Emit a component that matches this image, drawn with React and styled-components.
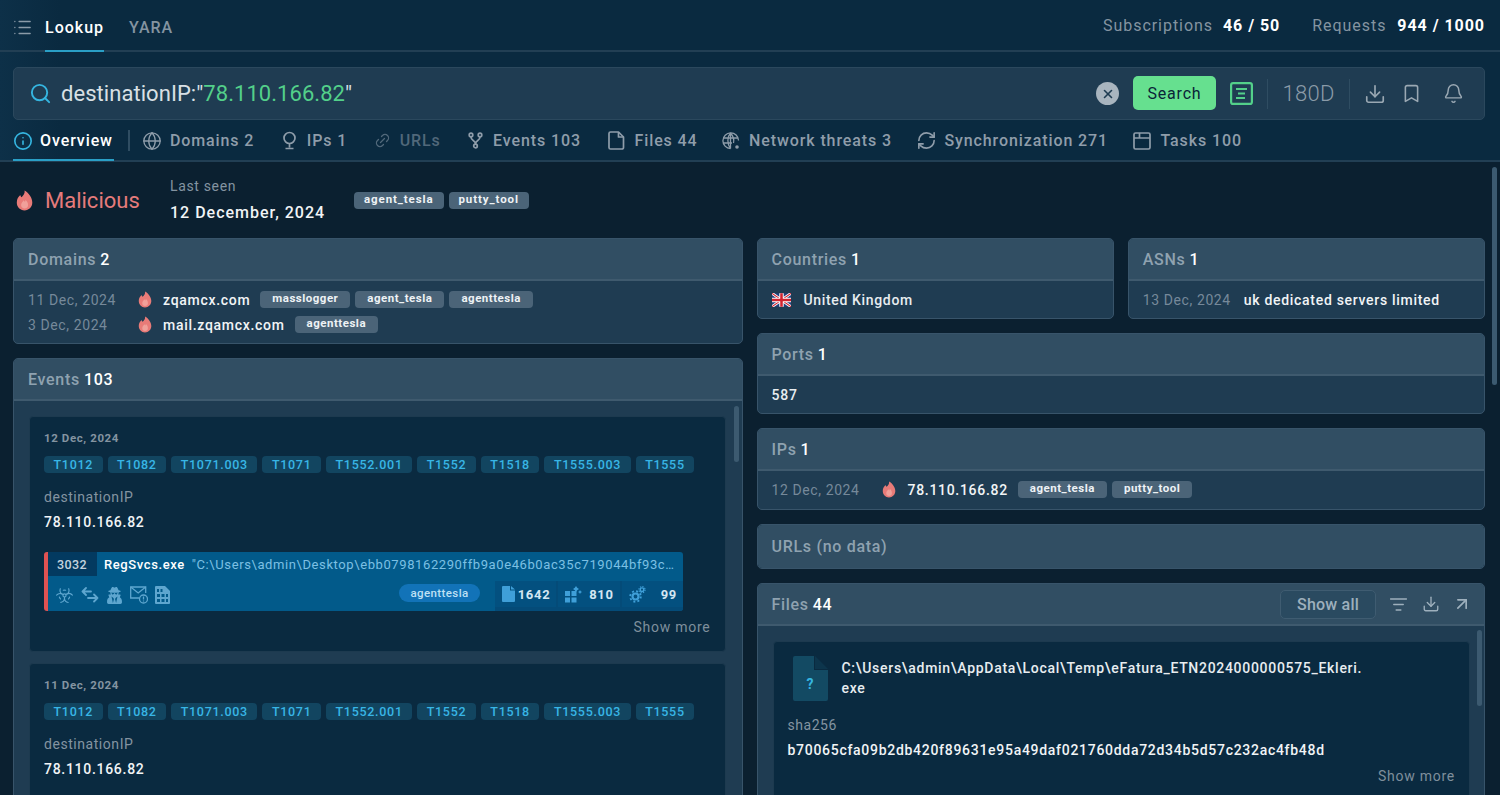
import React from 'react';
import styled, { createGlobalStyle } from 'styled-components';
import { List, Search, Info, Globe, Link2, RefreshCw, X, Download, Bookmark, Bell, ListFilter, ArrowUpRight, Biohazard } from 'lucide-react';
import { FaUserSecret } from 'react-icons/fa';

const Global = createGlobalStyle`
  html, body { margin: 0; padding: 0; background: #0b2030; }
  * { box-sizing: border-box; }
  body { font-family: Roboto, "Liberation Sans", sans-serif; color: #e6ebef; }
`;

const Page = styled.div`
  width: 1500px; height: 795px; overflow: hidden; position: relative;
  display: flex; flex-direction: column; background: #0b2030;
`;
const Head = styled.div`
  background: linear-gradient(90deg, #0d3048 0, #0a2a40 60px, #0a2a40 100%);
  border-bottom: 2px solid #223f54; height: 162px; flex: none;
  display: flex; flex-direction: column;
`;
const TopBar = styled.div`
  height: 52px; flex: none; display: flex; align-items: stretch; padding: 0 15px 0 14px;
  border-bottom: 2px solid #223f54;
`;
const MenuBtn = styled.div`
  width: 31px; display: flex; align-items: center; color: #8b9ba8; padding-top: 4px;
`;
const TopTab = styled.div`
  height: 52px; margin-right: 25px; display: flex; align-items: center; padding-top: 5px;
  font-size: 16px; font-weight: 500; letter-spacing: 1px;
  color: ${p => p.$active ? '#ffffff' : '#8494a1'};
  border-bottom: 2px solid ${p => p.$active ? '#2a9fc6' : 'transparent'};
`;
const Quota = styled.div`
  margin-left: auto; display: flex; align-items: center; padding-top: 1px;
`;
const QuotaLabel = styled.span`
  font-size: 16px; color: #8494a1; letter-spacing: .95px; margin-right: ${p => p.$mr ?? 10}px;
`;
const QuotaValue = styled.span`
  font-size: 16px; font-weight: 700; color: #fff; letter-spacing: .95px; margin-right: ${p => p.$last ? 0 : 32}px;
`;
const SearchBar = styled.div`
  height: 53px; margin: 15px 15px 0 13px; flex: none; background: #1f3c52;
  border: 1px solid #2b485d; border-radius: 5px; display: flex; align-items: center;
  padding: 0 20px 0 15px;
`;
const SearchIcon = styled.div`
  color: #35b5e0; display: flex; margin-right: 9px;
`;
const Query = styled.div`
  font-size: 22px; color: #d9e0e5; flex: 1; letter-spacing: .05px; white-space: nowrap;
`;
const Green = styled.span` color: #53d08a; `;
const Clear = styled.div`
  width: 23px; height: 23px; border-radius: 50%; background: #a9b5bf; color: #1f3c52;
  display: flex; align-items: center; justify-content: center; margin-right: 14px;
`;
const SearchBtn = styled.div`
  width: 83px; height: 34px; border-radius: 5px; background: #66e08f; color: #0a2438;
  font-size: 16px; font-weight: 400; letter-spacing: .8px; margin-bottom: 1px;
  display: flex; align-items: center; justify-content: center; margin-right: 14px;
`;
const Outline = styled.div`
  width: 23px; height: 23px; color: #53d08a; display: flex; margin-right: 14px;
`;
const VLine = styled.div`
  width: 1px; height: 30px; background: #2f4d62; flex: none;
`;
const Period = styled.div`
  font-size: 22px; font-weight: 300; color: #8b9ba8; width: 81px; text-align: center; letter-spacing: .3px;
`;
const ToolIcon = styled.div`
  color: #9aa8b3; display: flex; margin-left: ${p => p.$ml || 0}px;
`;
const Tabs = styled.div`
  display: flex; align-items: stretch; height: 41px; padding-left: 13px;
`;
const Tab = styled.div`
  display: flex; align-items: center; gap: ${p => p.$active ? 8 : 9}px; height: 41px; margin-right: ${p => p.$mr ?? 26.4}px;
  padding: ${p => p.$active ? '2px 1px 0' : '0'};
  font-size: 16px; font-weight: 500; letter-spacing: .9px; white-space: nowrap;
  color: ${p => p.$active ? '#fff' : p.$off ? '#51687a' : '#8f9daa'};
  border-bottom: ${p => p.$active ? '2px solid #2a9fc6' : 'none'};
  svg { color: ${p => p.$active ? '#35b5e0' : p.$off ? '#51687a' : '#8f9daa'}; flex: none; }
`;
const TabSep = styled.div`
  width: 2px; height: 21px; background: #2f4d62; align-self: center; margin: 0 13px 0 14px; flex: none;
`;
const Main = styled.div`
  flex: 1; min-height: 0; overflow: hidden; position: relative; padding: 0 15px 0 13px;
`;
const Thumb = styled.div`
  position: absolute; background: ${p => p.$c || '#3c5a70'}; border-radius: 3px;
  right: ${p => p.$r}px; top: ${p => p.$t}px; width: 5px; height: ${p => p.$h}px;
`;
const Summary = styled.div`
  height: 76px; display: flex; align-items: center;
`;
const Verdict = styled.div`
  display: flex; align-items: center; gap: 12px; width: 157px; padding-left: 3px;
  font-size: 22px; color: #e57b7b; padding-top: 1px;
`;
const Seen = styled.div` width: 184px; `;
const SeenLabel = styled.div` font-size: 14px; color: #8494a1; letter-spacing: .65px; line-height: 20px; `;
const SeenDate = styled.div` font-size: 16px; font-weight: 500; color: #f1f4f6; letter-spacing: 1px; line-height: 24px; margin-top: 5px; `;
const TagRow = styled.div` display: flex; gap: 5px; align-items: center; `;
const Tag = styled.span`
  height: 17px; border-radius: 4px; background: #4b6478; color: #eef2f5;
  padding: 0 ${p => p.$compact ? 12 : 10}px ${p => p.$compact ? 4 : 2}px;
  font-size: 11.5px; font-weight: 700; letter-spacing: ${p => p.$compact ? .5 : .9}px;
  display: inline-flex; align-items: center; white-space: nowrap;
`;
const Columns = styled.div`
  display: grid; grid-template-columns: 729.5px 728.5px; gap: 14px; align-items: start;
`;
const Col = styled.div` display: flex; flex-direction: column; gap: 14px; min-width: 0; `;
const Pair = styled.div` display: grid; grid-template-columns: 1fr 1fr; gap: 14px; `;
const Panel = styled.section`
  background: #1f3c52; border: 1px solid #38546a; border-radius: 5px; overflow: hidden; position: relative;
`;
const PanelHead = styled.div`
  height: ${p => p.$plain ? 43 : 42}px; background: #314e63; display: flex; align-items: center; padding: 0 14px;
  border-bottom: ${p => p.$plain ? 'none' : '2px solid #3f5a6e'}; font-size: 16px; font-weight: 500; color: #8fa2b0; letter-spacing: .7px;
`;
const Num = styled.b` color: #fff; font-weight: 500; margin-left: 4px; letter-spacing: .7px; `;
const Body = styled.div` padding: ${p => p.$pad || '6px 14px'}; `;
const Row = styled.div`
  height: ${p => p.$h || 25}px; display: flex; align-items: center; font-size: 14px;
`;
const DateCell = styled.span`
  color: #76899a; letter-spacing: .6px; width: ${p => p.$w || 110}px; flex: none; white-space: nowrap;
`;
const Flame = styled.span` display: flex; width: 14px; flex: none; margin-right: ${p => p.$mr ?? 0}px; `;
const Host = styled.span`
  color: #f1f4f6; font-weight: 500; letter-spacing: .7px; margin-right: 10px; white-space: nowrap;
`;
const Cards = styled.div`
  padding: 15px ${p => p.$right ?? 15}px 0 15px; display: flex; flex-direction: column; gap: 11px;
`;
const Card = styled.div`
  background: #0a2a40; border: 1px solid #1d3a4f; border-radius: 4px; padding: 14px; height: ${p => p.$h || 'auto'}; position: relative;
`;
const EventDate = styled.div`
  font-size: 11.5px; font-weight: 700; color: #8494a1; letter-spacing: .6px; line-height: 14px;
`;
const Ttags = styled.div` display: flex; gap: 5px; margin-top: 11px; `;
const TTag = styled.span`
  height: 17px; border-radius: 4px; background: #124560; color: #38b6e6; padding: 0 9.5px;
  font-size: 12.5px; font-weight: 500; letter-spacing: .71px; display: inline-flex; align-items: center; white-space: nowrap;
`;
const FieldLabel = styled.div`
  font-size: 14px; color: #8494a1; letter-spacing: .55px; line-height: 18px; margin-top: ${p => p.$mt ?? 15}px;
`;
const FieldValue = styled.div`
  font-size: 14px; font-weight: 500; color: #f1f4f6; letter-spacing: .71px; line-height: 18px; margin-top: 7px; white-space: nowrap;
`;
const Process = styled.div`
  margin-top: 21px; width: 639px; height: 59px; background: #025a8a; border-left: 4px solid #e05252; border-radius: 3px;
  display: flex; flex-direction: column; overflow: hidden;
`;
const ProcTop = styled.div` height: 24px; display: flex; align-items: center; flex: none; `;
const Pid = styled.div`
  width: 49px; height: 24px; background: #033a60; color: #c4d3de; font-size: 12.5px; font-weight: 500; letter-spacing: .4px;
  display: flex; align-items: center; justify-content: center; padding-right: 1px;
`;
const ProcName = styled.div`
  font-size: 13px; font-weight: 500; color: #fff; letter-spacing: .6px; margin: 0 7px 0 7px; white-space: nowrap;
`;
const ProcCmd = styled.div`
  font-size: 13px; color: #7cc0e4; letter-spacing: .6px; white-space: nowrap;
`;
const ProcBottom = styled.div` flex: 1; display: flex; align-items: stretch; `;
const ProcIcons = styled.div`
  display: flex; align-items: center; gap: 7px; color: #5ea6cf; padding-left: 7px; flex: 1; padding-top: 3px;
`;
const Pill = styled.div`
  height: 18px; width: 81px; border-radius: 9px; background: #1273b8; color: #bfe0f4; font-size: 11.5px; font-weight: 500; letter-spacing: .4px;
  display: flex; align-items: center; justify-content: center; align-self: center; margin-right: 15px; margin-bottom: 1px;
`;
const Stats = styled.div`
  width: 188px; margin-top: 5px; background: #044b78; display: flex; gap: 2px; padding-bottom: 4px;
`;
const Stat = styled.div`
  flex: 1; background: #03507f; display: flex; align-items: center; justify-content: space-between; padding: 0 6px 0 7px;
  font-size: 13px; font-weight: 700; color: #d3e6f2; letter-spacing: .7px;
  svg { color: #3f9fd8; flex: none; }
`;
const ShowMore = styled.div`
  text-align: right; font-size: 14px; color: #7f8f9c; letter-spacing: .75px; line-height: 18px; margin-top: ${p => p.$mt ?? 7}px;
`;
const ShowAll = styled.div`
  margin-left: auto; width: 96px; height: 29px; border: 1px solid #3f5c71; border-radius: 5px;
  display: flex; align-items: center; justify-content: center; color: #9eb0bd; font-size: 16px; font-weight: 500;
  margin-right: 12px; letter-spacing: .2px; background: #2a4a60;
`;
const HeadIcon = styled.div` display: flex; color: #9eb0bd; margin-left: ${p => p.$ml || 0}px; margin-right: ${p => p.$mr || 0}px; `;
const FileHead = styled.div` display: flex; gap: 14px; align-items: flex-start; padding-left: 5px; `;
const FilePath = styled.div`
  font-size: 14px; font-weight: 500; color: #e8edf0; line-height: 20px; letter-spacing: .7px; white-space: nowrap; margin-top: 2px;
`;
const Country = styled.span`
  color: #e8edf0; font-weight: 500; letter-spacing: .65px; margin-left: 13px;
`;
const Port = styled.div`
  font-size: 14px; font-weight: 500; color: #e8edf0; letter-spacing: .8px;
`;

const FlameIcon = () => (
  <svg width="17" height="21" viewBox="0 0 17 21"><path fill="#e87b78" d="M8.600.6c.5 3.100-1.200 4.700-3 6.600-.9-.7-1.200-1.500-1.300-2.200C2.300 6.700.8 9 .8 12.500c0 4.500 3.400 7.900 7.700 7.900s7.800-3.300 7.800-7.900C16.300 7.900 12.900 3.100 8.600.6z"/><path fill="#f0a09a" d="M8.600 18.500c-2 0-3.500-1.500-3.500-3.500 0-2 1.600-3.100 2.500-4.800.3.900.9 1.300 1.500 1.500.3-.7.4-1.300.3-2 1.800 1.400 2.700 3.300 2.700 5.300 0 2-1.500 3.500-3.500 3.500z"/></svg>
);
const SmallFlame = () => (
  <svg width="14" height="17" viewBox="0 0 17 21"><path fill="#e87b78" d="M8.600.6c.5 3.100-1.200 4.700-3 6.600-.9-.7-1.200-1.500-1.300-2.200C2.300 6.700.8 9 .8 12.500c0 4.500 3.400 7.900 7.700 7.900s7.800-3.300 7.800-7.900C16.300 7.900 12.900 3.100 8.600.6z"/><path fill="#f0a09a" d="M8.600 18.500c-2 0-3.500-1.500-3.500-3.500 0-2 1.600-3.100 2.500-4.800.3.900.9 1.300 1.500 1.500.3-.7.4-1.300.3-2 1.800 1.400 2.700 3.300 2.700 5.300 0 2-1.500 3.500-3.500 3.500z"/></svg>
);
const UkFlag = () => (
  <svg width="19" height="14" viewBox="0 0 60 42">
    <rect width="60" height="42" fill="#22407f" />
    <path d="M0 0L60 42M60 0L0 42" stroke="#fff" strokeWidth="9" />
    <path d="M0 0L60 42M60 0L0 42" stroke="#d2232f" strokeWidth="3.500" />
    <path d="M30 0V42M0 21H60" stroke="#fff" strokeWidth="14" />
    <path d="M30 0V42M0 21H60" stroke="#d2232f" strokeWidth="8" />
  </svg>
);
const Summarize = () => (
  <svg width="23" height="23" viewBox="0 0 23 23" fill="none" stroke="currentColor" strokeWidth="2.200">
    <rect x="1.100" y="1.100" width="20.800" height="20.800" rx="2" />
    <path d="M6 7h11M8 11.500h7M6 16h9" />
  </svg>
);
const PinIcon = () => (
  <svg width="17" height="19" viewBox="0 0 17 19" fill="none" stroke="currentColor" strokeWidth="1.700">
    <circle cx="8.500" cy="7" r="5.500" />
    <path d="M8.500 12.500v4M4.500 17.500h8" />
  </svg>
);
const ForkIcon = () => (
  <svg width="16" height="17" viewBox="0 0 16 17" fill="none" stroke="currentColor" strokeWidth="1.700">
    <circle cx="3" cy="3" r="1.800" /><circle cx="12" cy="3" r="1.800" /><circle cx="7.500" cy="14" r="1.800" />
    <path d="M3 5c0 4 4.500 3 4.500 7M12 5c0 4-4.500 3-4.500 7" />
  </svg>
);
const NetIcon = () => (
  <svg width="18" height="18" viewBox="0 0 18 18" fill="none" stroke="currentColor" strokeWidth="1.300">
    <path d="M16.500 8.500A7.800 7.800 0 1 0 8.500 16.500" />
    <path d="M1 6h15M1 11h9M8.500 1v15.500M8.500 1C5 5 5 12 8.500 16.500M8.500 1c3.500 4 3.500 8 3 10" />
    <circle cx="15" cy="15" r="1.800" fill="currentColor" stroke="none" />
  </svg>
);
const DocIcon = () => (
  <svg width="17" height="19" viewBox="0 0 17 19" fill="none" stroke="currentColor" strokeWidth="1.700" strokeLinejoin="round">
    <path d="M2.500 1h8l5 5v10.500a1.500 1.500 0 0 1-1.500 1.500H2.500A1.500 1.500 0 0 1 1 16.500v-14A1.500 1.500 0 0 1 2.500 1z" />
    <path d="M10.500 1v5h5" />
  </svg>
);
const TaskIcon = () => (
  <svg width="18" height="18" viewBox="0 0 18 18" fill="none" stroke="currentColor" strokeWidth="1.700">
    <rect x="1" y="1" width="16" height="16" rx="1.500" />
    <path d="M1 6h16M6.500 1v5" />
  </svg>
);
const SwapArrows = () => (
  <svg width="18" height="16" viewBox="0 0 18 16" fill="none" stroke="currentColor" strokeWidth="1.800" strokeLinecap="round" strokeLinejoin="round">
    <path d="M10 4.500H1.500M5 1L1.500 4.500 5 8" />
    <path d="M7 11h9.500M13 7.500l3.500 3.500-3.500 3.500" />
  </svg>
);
const MailAlert = () => (
  <svg width="18" height="18" viewBox="0 0 18 18" fill="none" stroke="currentColor" strokeWidth="1.300">
    <path d="M9 12H.7V1h15v6" />
    <path d="M.7 1l7.500 6 7.500-6" />
    <circle cx="13.500" cy="13" r="4" />
    <path d="M13.500 10.500v3M13.500 14.500v1" />
  </svg>
);
const Gears = () => (
  <svg width="17" height="17" viewBox="0 0 17 17" fill="none" stroke="currentColor">
    <circle cx="6.500" cy="10.500" r="3" strokeWidth="2.200" />
    <circle cx="6.500" cy="10.500" r="5.300" strokeWidth="1.800" strokeDasharray="2 2.160" />
    <circle cx="13" cy="3.700" r="1.800" strokeWidth="1.400" />
    <circle cx="13" cy="3.700" r="3.100" strokeWidth="1.100" strokeDasharray="1.300 1.130" />
  </svg>
);
const FileQ = () => (
  <svg width="35" height="45" viewBox="0 0 35 45">
    <path fill="#134a63" d="M2 0h19v14h14v29a2 2 0 0 1-2 2H2a2 2 0 0 1-2-2V2a2 2 0 0 1 2-2z" />
    <path fill="#134a63" d="M22 0l13 13H22z" opacity=".35" />
    <text x="17" y="33" textAnchor="middle" fontFamily="Roboto" fontWeight="700" fontSize="14" fill="#35b5e0">?</text>
  </svg>
);
const FileChip = () => (
  <svg width="13" height="16" viewBox="0 0 13 16"><path fill="currentColor" d="M1 0h7v4.500h5V15a1 1 0 0 1-1 1H1a1 1 0 0 1-1-1V1a1 1 0 0 1 1-1z"/><path fill="currentColor" d="M9 0l4 3.500H9z"/></svg>
);
const Blocks = () => (
  <svg width="17" height="17" viewBox="0 0 17 17" fill="currentColor">
    <rect x="0" y="5" width="5" height="5" /><rect x="0" y="11.500" width="5" height="5" /><rect x="6.500" y="11.500" width="5" height="5" /><rect x="6.500" y="5" width="5" height="5" />
    <path d="M11 0l1.200 1.800L14 3l-1.800 1.200L11 6 9.800 4.200 8 3l1.800-1.200zM15 4l.7 1.300L17 6l-1.300.7L15 8l-.7-1.300L13 6l1.300-.7z" />
  </svg>
);
const BinFile = () => (
  <svg width="15" height="18" viewBox="0 0 15 18">
    <path fill="currentColor" d="M1 0h9l5 5v12a1 1 0 0 1-1 1H1a1 1 0 0 1-1-1V1a1 1 0 0 1 1-1z" />
    <g fill="#025a8a"><rect x="2" y="3" width="2" height="3"/><rect x="5.500" y="3" width="2" height="3"/><rect x="2" y="8" width="3" height="3"/><rect x="6.500" y="8" width="3" height="3"/><rect x="11" y="8" width="2" height="3"/><rect x="2" y="13" width="3" height="3"/><rect x="6.500" y="13" width="3" height="3"/><rect x="11" y="13" width="2" height="3"/></g>
  </svg>
);

const ttags = ['T1012','T1082','T1071.003','T1071','T1552.001','T1552','T1518','T1555.003','T1555'];

const EventBlock = ({ date, h, proc }) => (
  <Card $h={h}>
    <EventDate>{date}</EventDate>
    <Ttags>{ttags.map(t => <TTag key={t}>{t}</TTag>)}</Ttags>
    <FieldLabel>destinationIP</FieldLabel>
    <FieldValue>78.110.166.82</FieldValue>
    {proc && (<>
      <Process>
        <ProcTop>
          <Pid>3032</Pid>
          <ProcName>RegSvcs.exe</ProcName>
          <ProcCmd>"C:\Users\admin\Desktop\ebb0798162290ffb9a0e46b0ac35c719044bf93c…</ProcCmd>
        </ProcTop>
        <ProcBottom>
          <ProcIcons>
            <Biohazard size={19} strokeWidth={1.4} />
            <SwapArrows />
            <FaUserSecret size={17} />
            <MailAlert />
            <BinFile />
          </ProcIcons>
          <Pill>agenttesla</Pill>
          <Stats>
            <Stat><FileChip />1642</Stat>
            <Stat><Blocks />810</Stat>
            <Stat><Gears />99</Stat>
          </Stats>
        </ProcBottom>
      </Process>
      <ShowMore>Show more</ShowMore>
    </>)}
  </Card>
);

export default function App() {
  return (
    <Page>
      <Global />
      <Head>
        <TopBar>
          <MenuBtn><List size={17} strokeWidth={1.6} viewBox="2 4 20 16" /></MenuBtn>
          <TopTab $active>Lookup</TopTab>
          <TopTab>YARA</TopTab>
          <Quota>
            <QuotaLabel>Subscriptions</QuotaLabel><QuotaValue>46 / 50</QuotaValue>
            <QuotaLabel $mr={11}>Requests</QuotaLabel><QuotaValue $last>944 / 1000</QuotaValue>
          </Quota>
        </TopBar>
        <SearchBar>
          <SearchIcon><Search size={23} strokeWidth={2} /></SearchIcon>
          <Query>destinationIP:"<Green>78.110.166.82</Green>"</Query>
          <Clear><X size={14} strokeWidth={2.8} /></Clear>
          <SearchBtn>Search</SearchBtn>
          <Outline><Summarize /></Outline>
          <VLine />
          <Period>180D</Period>
          <VLine />
          <ToolIcon $ml={14}><Download size={22} strokeWidth={1.8} /></ToolIcon>
          <ToolIcon $ml={15}><Bookmark size={21} strokeWidth={1.8} /></ToolIcon>
          <ToolIcon $ml={21}><Bell size={21} strokeWidth={1.7} /></ToolIcon>
        </SearchBar>
        <Tabs>
          <Tab $active $mr={0}><Info size={18} strokeWidth={2} viewBox="1 1 22 22" />Overview</Tab>
          <TabSep />
          <Tab><Globe size={18} strokeWidth={1.6} viewBox="1 1 22 22" />Domains 2</Tab>
          <Tab><PinIcon />IPs 1</Tab>
          <Tab $off $mr={27.4}><Link2 size={17} strokeWidth={1.8} style={{transform:'rotate(-45deg)'}} />URLs</Tab>
          <Tab $mr={27.4}><ForkIcon />Events 103</Tab>
          <Tab $mr={24.4}><DocIcon />Files 44</Tab>
          <Tab><NetIcon />Network threats 3</Tab>
          <Tab $mr={25.4}><RefreshCw size={17} strokeWidth={1.9} viewBox="2 2 20 20" />Synchronization 271</Tab>
          <Tab><TaskIcon />Tasks 100</Tab>
        </Tabs>
      </Head>
      <Main>
        <Thumb $r={3} $t={5} $h={218} />
        <Summary>
          <Verdict><FlameIcon />Malicious</Verdict>
          <Seen>
            <SeenLabel>Last seen</SeenLabel>
            <SeenDate>12 December, 2024</SeenDate>
          </Seen>
          <TagRow><Tag>agent_tesla</Tag><Tag>putty_tool</Tag></TagRow>
        </Summary>
        <Columns>
          <Col>
            <Panel>
              <PanelHead>Domains <Num>2</Num></PanelHead>
              <Body>
                <Row><DateCell>11 Dec, 2024</DateCell><Flame $mr={11}><SmallFlame /></Flame><Host>zqamcx.com</Host><TagRow><Tag $compact>masslogger</Tag><Tag $compact>agent_tesla</Tag><Tag $compact>agenttesla</Tag></TagRow></Row>
                <Row><DateCell>3 Dec, 2024</DateCell><Flame $mr={11}><SmallFlame /></Flame><Host>mail.zqamcx.com</Host><TagRow><Tag $compact>agenttesla</Tag></TagRow></Row>
              </Body>
            </Panel>
            <Panel>
              <PanelHead>Events <Num>103</Num></PanelHead>
              <Thumb $r={3} $t={47} $h={56} />
              <Cards $right={16}>
                <EventBlock date="12 Dec, 2024" h="236px" proc />
                <EventBlock date="11 Dec, 2024" h="180px" />
              </Cards>
            </Panel>
          </Col>
          <Col>
            <Pair>
              <Panel>
                <PanelHead>Countries <Num>1</Num></PanelHead>
                <Body><Row><UkFlag /><Country>United Kingdom</Country></Row></Body>
              </Panel>
              <Panel>
                <PanelHead>ASNs <Num>1</Num></PanelHead>
                <Body><Row><DateCell $w={101}>13 Dec, 2024</DateCell><Host>uk dedicated servers limited</Host></Row></Body>
              </Panel>
            </Pair>
            <Panel>
              <PanelHead>Ports <Num>1</Num></PanelHead>
              <Body><Row><Port>587</Port></Row></Body>
            </Panel>
            <Panel>
              <PanelHead>IPs <Num>1</Num></PanelHead>
              <Body $pad="6px 14px 7px"><Row><DateCell>12 Dec, 2024</DateCell><Flame $mr={12}><SmallFlame /></Flame><Host>78.110.166.82</Host><TagRow><Tag $compact>agent_tesla</Tag><Tag $compact>putty_tool</Tag></TagRow></Row></Body>
            </Panel>
            <Panel>
              <PanelHead $plain>URLs (no data)</PanelHead>
            </Panel>
            <Panel>
              <PanelHead>
                Files <Num>44</Num>
                <ShowAll>Show all</ShowAll>
                <HeadIcon $ml={1}><ListFilter size={19} strokeWidth={1.7} /></HeadIcon>
                <HeadIcon $ml={14}><Download size={18} strokeWidth={1.8} /></HeadIcon>
                <HeadIcon $ml={12} $mr={-2}><ArrowUpRight size={20} strokeWidth={2} /></HeadIcon>
              </PanelHead>
              <Thumb $r={2} $t={46} $h={76} />
              <Cards $right={14}>
                <Card $h="220px">
                  <FileHead>
                    <FileQ />
                    <FilePath>C:\Users\admin\AppData\Local\Temp\eFatura_ETN2024000000575_Ekleri.<br />exe</FilePath>
                  </FileHead>
                  <FieldLabel>sha256</FieldLabel>
                  <FieldValue>b70065cfa09b2db420f89631e95a49daf021760dda72d34b5d57c232ac4fb48d</FieldValue>
                  <ShowMore $mt={8}>Show more</ShowMore>
                </Card>
              </Cards>
            </Panel>
          </Col>
        </Columns>
      </Main>
    </Page>
  );
}
